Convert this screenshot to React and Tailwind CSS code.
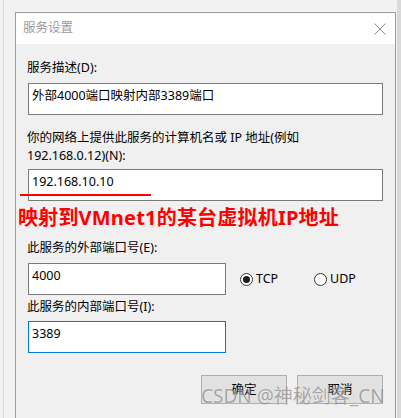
import React from "react";

const FONT = { fontFamily: '"Noto Sans", "Noto Sans CJK SC", sans-serif' };

function Radio({ checked, label }) {
  return (
    <div className="flex items-center gap-[3px]">
      <span className="w-[13px] h-[13px] rounded-full border border-[#333] bg-white flex items-center justify-center">
        {checked && <span className="w-[7px] h-[7px] rounded-full bg-[#1a1a1a]" />}
      </span>
      <span className="text-[12.5px] leading-[18px] text-black">{label}</span>
    </div>
  );
}

function Field({ value, width = "w-full", focus = false, children }) {
  return (
    <div className={`relative ${width} h-[32px] bg-white border ${focus ? "border-[#0078d7]" : "border-[#7a7a7a]"} pl-[3px] pt-[3px]`}>
      <span className="text-[12.5px] leading-[18px] text-black">{value}</span>
      {children}
    </div>
  );
}

export default function App() {
  return (
    <div className="relative w-[401px] h-[418px] overflow-hidden bg-[#f2f2f2]" style={FONT}>
      <div className="absolute left-[3px] top-0 bottom-0 w-px bg-[#dadada]" />
      <div className="absolute right-0 top-0 bottom-0 w-[4px] bg-[#d9d9d9]" />

      <div className="relative ml-[15px] mt-[12px] w-[381px] h-[420px] border border-[#9c9c9c] bg-[#f0f0f0] flex flex-col">
        {/* title bar */}
        <div className="h-[31px] bg-white flex items-center justify-between pl-[7px] pr-[9px]">
          <span className="text-[12.5px] text-[#9a9a9a]">服务设置</span>
          <svg width="12" height="12" viewBox="0 0 12 12">
            <path d="M0.5 0.5 L11.5 11.5 M11.5 0.5 L0.5 11.5" stroke="#8a8a8a" strokeWidth="1" fill="none" />
          </svg>
        </div>

        <div className="flex flex-col px-[12px] text-[12.5px] leading-[18px] text-black">
          <div className="mt-[15px] -ml-px">服务描述(D):</div>
          <div className="mt-[6px]">
            <Field value="外部4000端口映射内部3389端口" />
          </div>

          <div className="mt-[14px] -ml-px">
            你的网络上提供此服务的计算机名或 IP 地址(例如
            <br />
            192.168.0.12)(N):
          </div>
          <div className="mt-[4px]">
            <Field value="192.168.10.10">
              <div className="absolute left-[-9px] top-[24px] w-[131px] h-[2px] bg-[#ff0000]" />
            </Field>
          </div>

          <div className="mt-[5px] -ml-[10px] text-[20px] leading-[24px] font-bold text-[#ff0000] tracking-[0.2px]">
            映射到VMnet1的某台虚拟机IP地址
          </div>

          <div className="mt-[9px] -ml-px">此服务的外部端口号(E):</div>
          <div className="mt-[6px] flex items-center">
            <Field value="4000" width="w-[198px]" />
            <div className="ml-[14px] w-[74px]">
              <Radio checked label="TCP" />
            </div>
            <Radio label="UDP" />
          </div>

          <div className="mt-[3px] -ml-px">此服务的内部端口号(I):</div>
          <div className="mt-[5px]">
            <Field value="3389" width="w-[198px]" focus />
          </div>

          <div className="mt-[22px] flex justify-end gap-[10px]">
            <button className="w-[86px] h-[29px] bg-[#e1e1e1] border border-[#adadad] text-[12.5px] text-black">确定</button>
            <button className="w-[86px] h-[29px] bg-[#e1e1e1] border border-[#adadad] text-[12.5px] text-black">取消</button>
          </div>
        </div>
      </div>

      {/* watermark */}
      <div
        className="absolute left-[201px] top-[384px] text-[19px] leading-[24px] text-[#8c8c8c] opacity-70 whitespace-nowrap"
        style={{ textShadow: "0 0 2px #ffffff" }}
      >
        CSDN @神秘剑客_CN
      </div>
    </div>
  );
}
